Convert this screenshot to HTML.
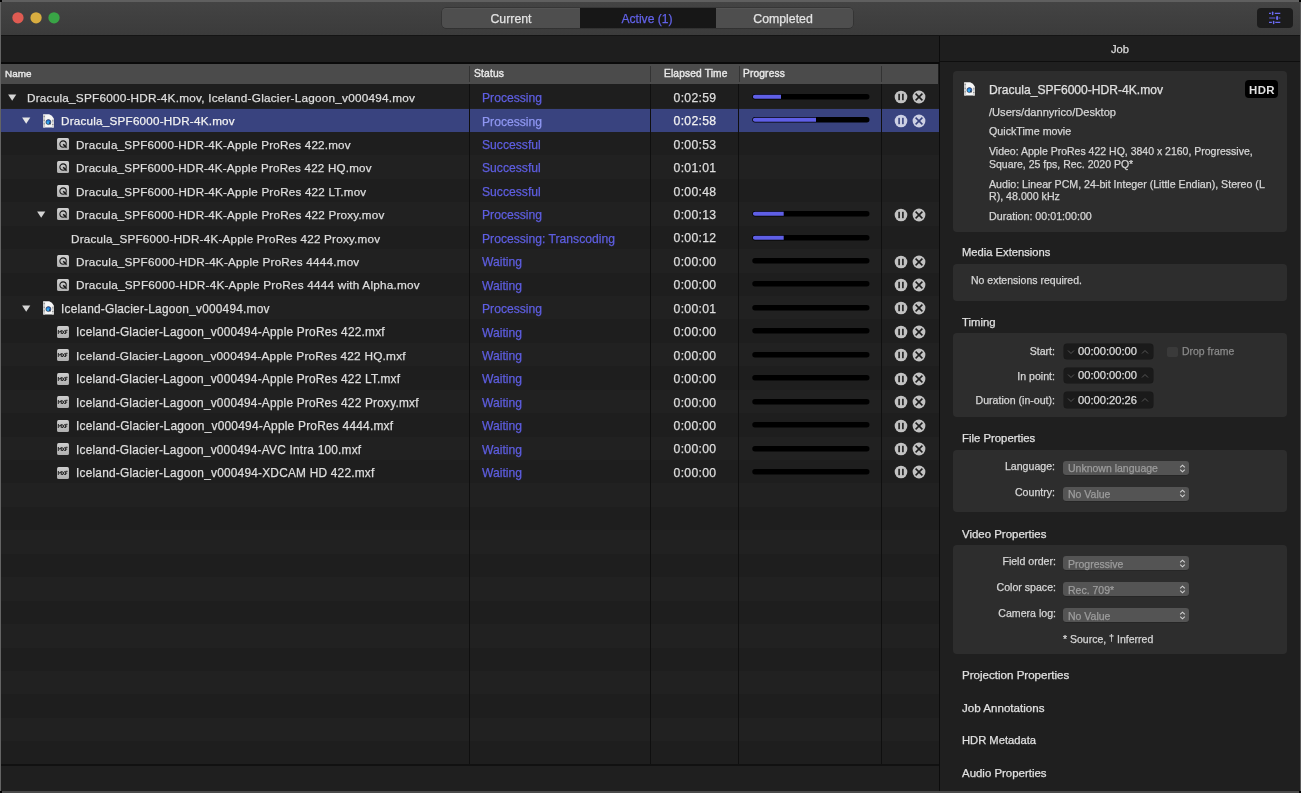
<!DOCTYPE html>
<html><head><meta charset="utf-8"><style>
html,body{margin:0;padding:0;}
body{width:1302px;height:796px;background:#ffffff;position:relative;overflow:hidden;font-family:"Liberation Sans",sans-serif;}
.r{position:absolute;}
.t{position:absolute;line-height:20px;white-space:nowrap;-webkit-text-stroke:0.25px currentColor;will-change:transform;}
</style></head><body>
<div class="r" style="left:0px;top:0px;width:1301px;height:793px;background:#1e1e1e;"></div>
<div class="r" style="left:0px;top:0px;width:1301px;height:35px;background:linear-gradient(#444444,#3b3b3b);"></div>
<div class="r" style="left:0px;top:0px;width:1301px;height:2px;background:#5f5f5f;"></div>
<div class="r" style="left:0px;top:35px;width:1301px;height:1px;background:#141414;"></div>
<svg class="r" style="left:0;top:0" width="70" height="35" viewBox="0 0 70 35"><circle cx="17.95" cy="17.85" r="5.65" fill="#df5b52"/><circle cx="36.05" cy="17.85" r="5.65" fill="#d8ad40"/><circle cx="54.0" cy="17.85" r="5.65" fill="#39a446"/></svg>
<div class="r" style="left:442px;top:8px;width:411px;height:20px;background:#4e4e4e;border-radius:4px;box-shadow:0 0.5px 0 rgba(255,255,255,0.08) inset, 0 0 0 0.5px rgba(0,0,0,0.35);"></div>
<div class="r" style="left:580px;top:8px;width:136px;height:20px;background:#171717;"></div>
<div class="t" style="top:8.54px;font-size:12.3px;color:#e2e2e2;left:211.20px;width:600px;text-align:center;">Current</div>
<div class="t" style="top:8.61px;font-size:12.1px;color:#6262e8;left:347.20px;width:600px;text-align:center;">Active (1)</div>
<div class="t" style="top:8.54px;font-size:12.3px;color:#e2e2e2;left:483.00px;width:600px;text-align:center;">Completed</div>
<div class="r" style="left:1257px;top:8px;width:36px;height:20px;background:#1c1c1c;border-radius:4px;"></div>
<svg class="r" style="left:1266px;top:8px" width="18" height="20" viewBox="0 0 18 20">
<g stroke="#6a6af2" stroke-width="1.15" stroke-linecap="butt" fill="none">
<path d="M3.0 5.4H4.9M8.8 5.4H14.3"/>
<path d="M3.2 10H9.3" stroke="#5656c4"/>
<path d="M13.2 10H14.3"/>
<path d="M3.0 14.4H5.9M9.3 14.4H14.3"/>
</g>
<g fill="#6a6af2">
<rect x="5.9" y="3.6" width="1.5" height="3.6" rx="0.75"/>
<rect x="10.1" y="8.0" width="2.1" height="4.0" rx="1.05"/>
<rect x="6.9" y="12.8" width="1.5" height="3.5" rx="0.75"/>
</g>
</svg>
<div class="r" style="left:1px;top:36px;width:938px;height:25px;background:#1e1e1e;"></div>
<div class="r" style="left:1px;top:62px;width:938px;height:2px;background:#0a0a0a;"></div>
<div class="r" style="left:1px;top:64px;width:937px;height:20px;background:#4b4b4b;"></div>
<div class="r" style="left:469px;top:65.5px;width:1px;height:16.5px;background:#333333;"></div>
<div class="r" style="left:650px;top:65.5px;width:1px;height:16.5px;background:#333333;"></div>
<div class="r" style="left:739px;top:65.5px;width:1px;height:16.5px;background:#333333;"></div>
<div class="r" style="left:881px;top:65.5px;width:1px;height:16.5px;background:#333333;"></div>
<div class="t" style="top:64.27px;font-size:9.9px;color:#e8e8e8;left:4.60px;-webkit-text-stroke:0.4px #e8e8e8;letter-spacing:0.05px;">Name</div>
<div class="t" style="top:64.13px;font-size:10.3px;color:#e8e8e8;left:473.80px;-webkit-text-stroke:0.4px #e8e8e8;letter-spacing:0.15px;">Status</div>
<div class="t" style="top:64.17px;font-size:10.2px;color:#e8e8e8;left:663.70px;-webkit-text-stroke:0.4px #e8e8e8;letter-spacing:0.15px;">Elapsed Time</div>
<div class="t" style="top:64.17px;font-size:10.2px;color:#e8e8e8;left:743.00px;-webkit-text-stroke:0.4px #e8e8e8;letter-spacing:0.15px;">Progress</div>
<div class="r" style="left:1px;top:85.4px;width:938px;height:678.6px;background:repeating-linear-gradient(#1e1e1e 0px,#1e1e1e 23.44px,#212121 23.44px,#212121 46.88px);"></div>
<div class="r" style="left:1px;top:84px;width:938px;height:1.4px;background:#1e1e1e;"></div>
<div class="r" style="left:1px;top:108.8px;width:938px;height:23.1px;background:#39437f;"></div>
<div class="r" style="left:469.0px;top:84px;width:1.2px;height:680px;background:#0f0f0f;"></div>
<div class="r" style="left:650.0px;top:84px;width:1.2px;height:680px;background:#0f0f0f;"></div>
<div class="r" style="left:738.0px;top:84px;width:1.2px;height:680px;background:#0f0f0f;"></div>
<div class="r" style="left:881.0px;top:84px;width:1.2px;height:680px;background:#0f0f0f;"></div>
<div class="r" style="left:1px;top:764px;width:938px;height:1.6px;background:#111111;"></div>
<div class="r" style="left:1px;top:765.6px;width:938px;height:25.4px;background:#1f1f1f;"></div>
<div class="r" style="left:938.6px;top:36px;width:1.3px;height:755px;background:#0c0c0c;"></div>
<svg class="r" style="left:7.60px;top:93.82px" width="9" height="8" viewBox="0 0 9 8"><path d="M0.1 0.45H8.3L4.2 6.85Z" fill="#d4d4d4"/></svg>
<div class="t" style="top:87.94px;font-size:11.773px;color:#dedede;left:26.90px;letter-spacing:0.219px;">Dracula_SPF6000-HDR-4K.mov, Iceland-Glacier-Lagoon_v000494.mov</div>
<div class="t" style="top:88.11px;font-size:12.15px;color:#5e5ee0;left:481.70px;">Processing</div>
<div class="t" style="top:87.79px;font-size:12.2px;color:#dedede;left:394.80px;width:600px;text-align:center;letter-spacing:0.3px;">0:02:59</div>
<svg class="r" style="left:752px;top:92.92px" width="119" height="8" viewBox="0 0 119 8"><rect x="0.3" y="1" width="117.2" height="5.4" rx="2.7" fill="#000"/><path d="M2.95 1.65H29.00V5.75H2.95A2.05 2.05 0 0 1 2.95 1.65Z" fill="#5f5fe6"/></svg>
<svg class="r" style="left:894px;top:90.42px" width="33" height="14" viewBox="0 0 33 14"><circle cx="7" cy="7" r="6.3" fill="#c2c2c2"/><rect x="4.3" y="3.8" width="1.6" height="6.4" fill="#1c1c1c"/><rect x="8.1" y="3.8" width="1.6" height="6.4" fill="#1c1c1c"/><circle cx="25" cy="7" r="6.4" fill="#c2c2c2"/><path d="M21.6 3.6L28.4 10.4M28.4 3.6L21.6 10.4" stroke="#1c1c1c" stroke-width="1.55"/></svg>
<svg class="r" style="left:21.60px;top:117.26px" width="9" height="8" viewBox="0 0 9 8"><path d="M0.1 0.45H8.3L4.2 6.85Z" fill="#e6e6e6"/></svg>
<svg class="r" style="left:43.300000000000004px;top:113.8px" width="11" height="14" viewBox="0 0 11 14">
<defs><radialGradient id="bq" cx="0.4" cy="0.6" r="0.65"><stop offset="0" stop-color="#3fc0f5"/><stop offset="1" stop-color="#1a4fc0"/></radialGradient></defs>
<path d="M0.2 0.2H6.2Q9.2 1.2 10.8 4.6V13.5H0.2Z" fill="#f7f7f7"/>
<rect x="0.2" y="0.6" width="1.9" height="12.9" fill="#cfcfcf"/>
<rect x="8.9" y="5.2" width="1.9" height="8.3" fill="#d6d6d6"/>
<g fill="#5a5a5a"><rect x="0.7" y="2.2" width="0.9" height="0.9"/><rect x="0.7" y="5.8" width="0.9" height="0.9"/><rect x="0.7" y="9.4" width="0.9" height="0.9"/><rect x="9.4" y="6.4" width="0.9" height="0.9"/><rect x="9.4" y="10.0" width="0.9" height="0.9"/></g>
<circle cx="5.4" cy="8.1" r="2.5" fill="url(#bq)" stroke="#2a2a30" stroke-width="0.55"/>
<path d="M6.0 8.6L7.6 10.1" stroke="#1a1a1a" stroke-width="0.9"/>
</svg>
<div class="t" style="top:111.41px;font-size:11.676px;color:#f2f2f2;left:61.10px;letter-spacing:0.234px;">Dracula_SPF6000-HDR-4K.mov</div>
<div class="t" style="top:111.55px;font-size:12.15px;color:#8f97f2;left:481.70px;">Processing</div>
<div class="t" style="top:111.23px;font-size:12.2px;color:#f2f2f2;left:394.80px;width:600px;text-align:center;letter-spacing:0.3px;">0:02:58</div>
<svg class="r" style="left:752px;top:116.36px" width="119" height="8" viewBox="0 0 119 8"><rect x="0.3" y="1" width="117.2" height="5.4" rx="2.7" fill="#000"/><path d="M2.95 1.65H64.00V5.75H2.95A2.05 2.05 0 0 1 2.95 1.65Z" fill="#5f5fe6"/></svg>
<svg class="r" style="left:894px;top:113.86px" width="33" height="14" viewBox="0 0 33 14"><circle cx="7" cy="7" r="6.3" fill="#cdd0e4"/><rect x="4.3" y="3.8" width="1.6" height="6.4" fill="#39437f"/><rect x="8.1" y="3.8" width="1.6" height="6.4" fill="#39437f"/><circle cx="25" cy="7" r="6.4" fill="#cdd0e4"/><path d="M21.6 3.6L28.4 10.4M28.4 3.6L21.6 10.4" stroke="#39437f" stroke-width="1.55"/></svg>
<svg class="r" style="left:57px;top:137.95px" width="12" height="12" viewBox="0 0 12 12">
<defs><linearGradient id="qg" x1="0" y1="0" x2="0" y2="1"><stop offset="0" stop-color="#d0d0d0"/><stop offset="1" stop-color="#b2b2b2"/></linearGradient></defs>
<rect x="0.05" y="0.05" width="11.95" height="11.95" rx="1.5" fill="url(#qg)"/>
<circle cx="6.05" cy="6.05" r="3.2" fill="none" stroke="#161616" stroke-width="1.05"/>
<path d="M6.2 6.2L9.6 9.6" stroke="#161616" stroke-width="1.5"/>
</svg>
<div class="t" style="top:134.87px;font-size:11.628px;color:#dedede;left:76.30px;letter-spacing:0.224px;">Dracula_SPF6000-HDR-4K-Apple ProRes 422.mov</div>
<div class="t" style="top:134.99px;font-size:12.15px;color:#5e5ee0;left:481.70px;">Successful</div>
<div class="t" style="top:134.67px;font-size:12.2px;color:#dedede;left:394.80px;width:600px;text-align:center;letter-spacing:0.3px;">0:00:53</div>
<svg class="r" style="left:57px;top:161.39px" width="12" height="12" viewBox="0 0 12 12">
<defs><linearGradient id="qg" x1="0" y1="0" x2="0" y2="1"><stop offset="0" stop-color="#d0d0d0"/><stop offset="1" stop-color="#b2b2b2"/></linearGradient></defs>
<rect x="0.05" y="0.05" width="11.95" height="11.95" rx="1.5" fill="url(#qg)"/>
<circle cx="6.05" cy="6.05" r="3.2" fill="none" stroke="#161616" stroke-width="1.05"/>
<path d="M6.2 6.2L9.6 9.6" stroke="#161616" stroke-width="1.5"/>
</svg>
<div class="t" style="top:158.32px;font-size:11.609px;color:#dedede;left:76.30px;letter-spacing:0.225px;">Dracula_SPF6000-HDR-4K-Apple ProRes 422 HQ.mov</div>
<div class="t" style="top:158.43px;font-size:12.15px;color:#5e5ee0;left:481.70px;">Successful</div>
<div class="t" style="top:158.11px;font-size:12.2px;color:#dedede;left:394.80px;width:600px;text-align:center;letter-spacing:0.3px;">0:01:01</div>
<svg class="r" style="left:57px;top:184.83px" width="12" height="12" viewBox="0 0 12 12">
<defs><linearGradient id="qg" x1="0" y1="0" x2="0" y2="1"><stop offset="0" stop-color="#d0d0d0"/><stop offset="1" stop-color="#b2b2b2"/></linearGradient></defs>
<rect x="0.05" y="0.05" width="11.95" height="11.95" rx="1.5" fill="url(#qg)"/>
<circle cx="6.05" cy="6.05" r="3.2" fill="none" stroke="#161616" stroke-width="1.05"/>
<path d="M6.2 6.2L9.6 9.6" stroke="#161616" stroke-width="1.5"/>
</svg>
<div class="t" style="top:181.75px;font-size:11.638px;color:#dedede;left:76.30px;letter-spacing:0.221px;">Dracula_SPF6000-HDR-4K-Apple ProRes 422 LT.mov</div>
<div class="t" style="top:181.87px;font-size:12.15px;color:#5e5ee0;left:481.70px;">Successful</div>
<div class="t" style="top:181.55px;font-size:12.2px;color:#dedede;left:394.80px;width:600px;text-align:center;letter-spacing:0.3px;">0:00:48</div>
<svg class="r" style="left:36.60px;top:211.02px" width="9" height="8" viewBox="0 0 9 8"><path d="M0.1 0.45H8.3L4.2 6.85Z" fill="#d4d4d4"/></svg>
<svg class="r" style="left:57px;top:208.27px" width="12" height="12" viewBox="0 0 12 12">
<defs><linearGradient id="qg" x1="0" y1="0" x2="0" y2="1"><stop offset="0" stop-color="#d0d0d0"/><stop offset="1" stop-color="#b2b2b2"/></linearGradient></defs>
<rect x="0.05" y="0.05" width="11.95" height="11.95" rx="1.5" fill="url(#qg)"/>
<circle cx="6.05" cy="6.05" r="3.2" fill="none" stroke="#161616" stroke-width="1.05"/>
<path d="M6.2 6.2L9.6 9.6" stroke="#161616" stroke-width="1.5"/>
</svg>
<div class="t" style="top:205.19px;font-size:11.638px;color:#dedede;left:76.30px;letter-spacing:0.221px;">Dracula_SPF6000-HDR-4K-Apple ProRes 422 Proxy.mov</div>
<div class="t" style="top:205.31px;font-size:12.15px;color:#5e5ee0;left:481.70px;">Processing</div>
<div class="t" style="top:204.99px;font-size:12.2px;color:#dedede;left:394.80px;width:600px;text-align:center;letter-spacing:0.3px;">0:00:13</div>
<svg class="r" style="left:752px;top:210.12px" width="119" height="8" viewBox="0 0 119 8"><rect x="0.3" y="1" width="117.2" height="5.4" rx="2.7" fill="#000"/><path d="M2.95 1.65H31.70V5.75H2.95A2.05 2.05 0 0 1 2.95 1.65Z" fill="#5f5fe6"/></svg>
<svg class="r" style="left:894px;top:207.62px" width="33" height="14" viewBox="0 0 33 14"><circle cx="7" cy="7" r="6.3" fill="#c2c2c2"/><rect x="4.3" y="3.8" width="1.6" height="6.4" fill="#1c1c1c"/><rect x="8.1" y="3.8" width="1.6" height="6.4" fill="#1c1c1c"/><circle cx="25" cy="7" r="6.4" fill="#c2c2c2"/><path d="M21.6 3.6L28.4 10.4M28.4 3.6L21.6 10.4" stroke="#1c1c1c" stroke-width="1.55"/></svg>
<div class="t" style="top:228.62px;font-size:11.667px;color:#dedede;left:70.70px;letter-spacing:0.221px;">Dracula_SPF6000-HDR-4K-Apple ProRes 422 Proxy.mov</div>
<div class="t" style="top:228.75px;font-size:12.15px;color:#5e5ee0;left:481.70px;">Processing: Transcoding</div>
<div class="t" style="top:228.43px;font-size:12.2px;color:#dedede;left:394.80px;width:600px;text-align:center;letter-spacing:0.3px;">0:00:12</div>
<svg class="r" style="left:752px;top:233.56px" width="119" height="8" viewBox="0 0 119 8"><rect x="0.3" y="1" width="117.2" height="5.4" rx="2.7" fill="#000"/><path d="M2.95 1.65H31.70V5.75H2.95A2.05 2.05 0 0 1 2.95 1.65Z" fill="#5f5fe6"/></svg>
<svg class="r" style="left:57px;top:255.15px" width="12" height="12" viewBox="0 0 12 12">
<defs><linearGradient id="qg" x1="0" y1="0" x2="0" y2="1"><stop offset="0" stop-color="#d0d0d0"/><stop offset="1" stop-color="#b2b2b2"/></linearGradient></defs>
<rect x="0.05" y="0.05" width="11.95" height="11.95" rx="1.5" fill="url(#qg)"/>
<circle cx="6.05" cy="6.05" r="3.2" fill="none" stroke="#161616" stroke-width="1.05"/>
<path d="M6.2 6.2L9.6 9.6" stroke="#161616" stroke-width="1.5"/>
</svg>
<div class="t" style="top:252.05px;font-size:11.696px;color:#dedede;left:76.30px;letter-spacing:0.226px;">Dracula_SPF6000-HDR-4K-Apple ProRes 4444.mov</div>
<div class="t" style="top:252.19px;font-size:12.15px;color:#5e5ee0;left:481.70px;">Waiting</div>
<div class="t" style="top:251.87px;font-size:12.2px;color:#dedede;left:394.80px;width:600px;text-align:center;letter-spacing:0.3px;">0:00:00</div>
<svg class="r" style="left:752px;top:257.00px" width="119" height="8" viewBox="0 0 119 8"><rect x="0.3" y="1" width="117.2" height="5.4" rx="2.7" fill="#000"/></svg>
<svg class="r" style="left:894px;top:254.5px" width="33" height="14" viewBox="0 0 33 14"><circle cx="7" cy="7" r="6.3" fill="#c2c2c2"/><rect x="4.3" y="3.8" width="1.6" height="6.4" fill="#1c1c1c"/><rect x="8.1" y="3.8" width="1.6" height="6.4" fill="#1c1c1c"/><circle cx="25" cy="7" r="6.4" fill="#c2c2c2"/><path d="M21.6 3.6L28.4 10.4M28.4 3.6L21.6 10.4" stroke="#1c1c1c" stroke-width="1.55"/></svg>
<svg class="r" style="left:57px;top:278.59px" width="12" height="12" viewBox="0 0 12 12">
<defs><linearGradient id="qg" x1="0" y1="0" x2="0" y2="1"><stop offset="0" stop-color="#d0d0d0"/><stop offset="1" stop-color="#b2b2b2"/></linearGradient></defs>
<rect x="0.05" y="0.05" width="11.95" height="11.95" rx="1.5" fill="url(#qg)"/>
<circle cx="6.05" cy="6.05" r="3.2" fill="none" stroke="#161616" stroke-width="1.05"/>
<path d="M6.2 6.2L9.6 9.6" stroke="#161616" stroke-width="1.5"/>
</svg>
<div class="t" style="top:275.47px;font-size:11.754px;color:#dedede;left:76.30px;letter-spacing:0.219px;">Dracula_SPF6000-HDR-4K-Apple ProRes 4444 with Alpha.mov</div>
<div class="t" style="top:275.63px;font-size:12.15px;color:#5e5ee0;left:481.70px;">Waiting</div>
<div class="t" style="top:275.31px;font-size:12.2px;color:#dedede;left:394.80px;width:600px;text-align:center;letter-spacing:0.3px;">0:00:00</div>
<svg class="r" style="left:752px;top:280.44px" width="119" height="8" viewBox="0 0 119 8"><rect x="0.3" y="1" width="117.2" height="5.4" rx="2.7" fill="#000"/></svg>
<svg class="r" style="left:894px;top:277.94px" width="33" height="14" viewBox="0 0 33 14"><circle cx="7" cy="7" r="6.3" fill="#c2c2c2"/><rect x="4.3" y="3.8" width="1.6" height="6.4" fill="#1c1c1c"/><rect x="8.1" y="3.8" width="1.6" height="6.4" fill="#1c1c1c"/><circle cx="25" cy="7" r="6.4" fill="#c2c2c2"/><path d="M21.6 3.6L28.4 10.4M28.4 3.6L21.6 10.4" stroke="#1c1c1c" stroke-width="1.55"/></svg>
<svg class="r" style="left:21.60px;top:304.78px" width="9" height="8" viewBox="0 0 9 8"><path d="M0.1 0.45H8.3L4.2 6.85Z" fill="#d4d4d4"/></svg>
<svg class="r" style="left:43.300000000000004px;top:301.32px" width="11" height="14" viewBox="0 0 11 14">
<defs><radialGradient id="bq" cx="0.4" cy="0.6" r="0.65"><stop offset="0" stop-color="#3fc0f5"/><stop offset="1" stop-color="#1a4fc0"/></radialGradient></defs>
<path d="M0.2 0.2H6.2Q9.2 1.2 10.8 4.6V13.5H0.2Z" fill="#f7f7f7"/>
<rect x="0.2" y="0.6" width="1.9" height="12.9" fill="#cfcfcf"/>
<rect x="8.9" y="5.2" width="1.9" height="8.3" fill="#d6d6d6"/>
<g fill="#5a5a5a"><rect x="0.7" y="2.2" width="0.9" height="0.9"/><rect x="0.7" y="5.8" width="0.9" height="0.9"/><rect x="0.7" y="9.4" width="0.9" height="0.9"/><rect x="9.4" y="6.4" width="0.9" height="0.9"/><rect x="9.4" y="10.0" width="0.9" height="0.9"/></g>
<circle cx="5.4" cy="8.1" r="2.5" fill="url(#bq)" stroke="#2a2a30" stroke-width="0.55"/>
<path d="M6.0 8.6L7.6 10.1" stroke="#1a1a1a" stroke-width="0.9"/>
</svg>
<div class="t" style="top:298.86px;font-size:11.898px;color:#dedede;left:60.80px;letter-spacing:0.215px;">Iceland-Glacier-Lagoon_v000494.mov</div>
<div class="t" style="top:299.07px;font-size:12.15px;color:#5e5ee0;left:481.70px;">Processing</div>
<div class="t" style="top:298.75px;font-size:12.2px;color:#dedede;left:394.80px;width:600px;text-align:center;letter-spacing:0.3px;">0:00:01</div>
<svg class="r" style="left:752px;top:303.88px" width="119" height="8" viewBox="0 0 119 8"><rect x="0.3" y="1" width="117.2" height="5.4" rx="2.7" fill="#000"/></svg>
<svg class="r" style="left:894px;top:301.38px" width="33" height="14" viewBox="0 0 33 14"><circle cx="7" cy="7" r="6.3" fill="#c2c2c2"/><rect x="4.3" y="3.8" width="1.6" height="6.4" fill="#1c1c1c"/><rect x="8.1" y="3.8" width="1.6" height="6.4" fill="#1c1c1c"/><circle cx="25" cy="7" r="6.4" fill="#c2c2c2"/><path d="M21.6 3.6L28.4 10.4M28.4 3.6L21.6 10.4" stroke="#1c1c1c" stroke-width="1.55"/></svg>
<svg class="r" style="left:57.1px;top:325.92px" width="12" height="12" viewBox="0 0 12 12">
<defs><linearGradient id="mg" x1="0" y1="0" x2="0" y2="1"><stop offset="0" stop-color="#cdcdcd"/><stop offset="1" stop-color="#b0b0b0"/></linearGradient></defs>
<rect x="0.05" y="0.05" width="11.9" height="11.95" rx="1.6" fill="url(#mg)"/>
<path d="M1.3 8V4.3L2.8 6.4L4.3 4.3V8M5.2 4.3L7.6 8M7.6 4.3L5.2 8M8.6 8V4.3H10.6M8.6 6.1H10.2" stroke="#1e1e1e" stroke-width="0.95" fill="none"/>
</svg>
<div class="t" style="top:322.30px;font-size:11.879px;color:#dedede;left:76.30px;letter-spacing:0.212px;">Iceland-Glacier-Lagoon_v000494-Apple ProRes 422.mxf</div>
<div class="t" style="top:322.51px;font-size:12.15px;color:#5e5ee0;left:481.70px;">Waiting</div>
<div class="t" style="top:322.19px;font-size:12.2px;color:#dedede;left:394.80px;width:600px;text-align:center;letter-spacing:0.3px;">0:00:00</div>
<svg class="r" style="left:752px;top:327.32px" width="119" height="8" viewBox="0 0 119 8"><rect x="0.3" y="1" width="117.2" height="5.4" rx="2.7" fill="#000"/></svg>
<svg class="r" style="left:894px;top:324.82px" width="33" height="14" viewBox="0 0 33 14"><circle cx="7" cy="7" r="6.3" fill="#c2c2c2"/><rect x="4.3" y="3.8" width="1.6" height="6.4" fill="#1c1c1c"/><rect x="8.1" y="3.8" width="1.6" height="6.4" fill="#1c1c1c"/><circle cx="25" cy="7" r="6.4" fill="#c2c2c2"/><path d="M21.6 3.6L28.4 10.4M28.4 3.6L21.6 10.4" stroke="#1c1c1c" stroke-width="1.55"/></svg>
<svg class="r" style="left:57.1px;top:349.36px" width="12" height="12" viewBox="0 0 12 12">
<defs><linearGradient id="mg" x1="0" y1="0" x2="0" y2="1"><stop offset="0" stop-color="#cdcdcd"/><stop offset="1" stop-color="#b0b0b0"/></linearGradient></defs>
<rect x="0.05" y="0.05" width="11.9" height="11.95" rx="1.6" fill="url(#mg)"/>
<path d="M1.3 8V4.3L2.8 6.4L4.3 4.3V8M5.2 4.3L7.6 8M7.6 4.3L5.2 8M8.6 8V4.3H10.6M8.6 6.1H10.2" stroke="#1e1e1e" stroke-width="0.95" fill="none"/>
</svg>
<div class="t" style="top:345.76px;font-size:11.841px;color:#dedede;left:76.30px;letter-spacing:0.214px;">Iceland-Glacier-Lagoon_v000494-Apple ProRes 422 HQ.mxf</div>
<div class="t" style="top:345.95px;font-size:12.15px;color:#5e5ee0;left:481.70px;">Waiting</div>
<div class="t" style="top:345.63px;font-size:12.2px;color:#dedede;left:394.80px;width:600px;text-align:center;letter-spacing:0.3px;">0:00:00</div>
<svg class="r" style="left:752px;top:350.76px" width="119" height="8" viewBox="0 0 119 8"><rect x="0.3" y="1" width="117.2" height="5.4" rx="2.7" fill="#000"/></svg>
<svg class="r" style="left:894px;top:348.26px" width="33" height="14" viewBox="0 0 33 14"><circle cx="7" cy="7" r="6.3" fill="#c2c2c2"/><rect x="4.3" y="3.8" width="1.6" height="6.4" fill="#1c1c1c"/><rect x="8.1" y="3.8" width="1.6" height="6.4" fill="#1c1c1c"/><circle cx="25" cy="7" r="6.4" fill="#c2c2c2"/><path d="M21.6 3.6L28.4 10.4M28.4 3.6L21.6 10.4" stroke="#1c1c1c" stroke-width="1.55"/></svg>
<svg class="r" style="left:57.1px;top:372.8px" width="12" height="12" viewBox="0 0 12 12">
<defs><linearGradient id="mg" x1="0" y1="0" x2="0" y2="1"><stop offset="0" stop-color="#cdcdcd"/><stop offset="1" stop-color="#b0b0b0"/></linearGradient></defs>
<rect x="0.05" y="0.05" width="11.9" height="11.95" rx="1.6" fill="url(#mg)"/>
<path d="M1.3 8V4.3L2.8 6.4L4.3 4.3V8M5.2 4.3L7.6 8M7.6 4.3L5.2 8M8.6 8V4.3H10.6M8.6 6.1H10.2" stroke="#1e1e1e" stroke-width="0.95" fill="none"/>
</svg>
<div class="t" style="top:369.19px;font-size:11.87px;color:#dedede;left:76.30px;letter-spacing:0.210px;">Iceland-Glacier-Lagoon_v000494-Apple ProRes 422 LT.mxf</div>
<div class="t" style="top:369.39px;font-size:12.15px;color:#5e5ee0;left:481.70px;">Waiting</div>
<div class="t" style="top:369.07px;font-size:12.2px;color:#dedede;left:394.80px;width:600px;text-align:center;letter-spacing:0.3px;">0:00:00</div>
<svg class="r" style="left:752px;top:374.20px" width="119" height="8" viewBox="0 0 119 8"><rect x="0.3" y="1" width="117.2" height="5.4" rx="2.7" fill="#000"/></svg>
<svg class="r" style="left:894px;top:371.7px" width="33" height="14" viewBox="0 0 33 14"><circle cx="7" cy="7" r="6.3" fill="#c2c2c2"/><rect x="4.3" y="3.8" width="1.6" height="6.4" fill="#1c1c1c"/><rect x="8.1" y="3.8" width="1.6" height="6.4" fill="#1c1c1c"/><circle cx="25" cy="7" r="6.4" fill="#c2c2c2"/><path d="M21.6 3.6L28.4 10.4M28.4 3.6L21.6 10.4" stroke="#1c1c1c" stroke-width="1.55"/></svg>
<svg class="r" style="left:57.1px;top:396.24px" width="12" height="12" viewBox="0 0 12 12">
<defs><linearGradient id="mg" x1="0" y1="0" x2="0" y2="1"><stop offset="0" stop-color="#cdcdcd"/><stop offset="1" stop-color="#b0b0b0"/></linearGradient></defs>
<rect x="0.05" y="0.05" width="11.9" height="11.95" rx="1.6" fill="url(#mg)"/>
<path d="M1.3 8V4.3L2.8 6.4L4.3 4.3V8M5.2 4.3L7.6 8M7.6 4.3L5.2 8M8.6 8V4.3H10.6M8.6 6.1H10.2" stroke="#1e1e1e" stroke-width="0.95" fill="none"/>
</svg>
<div class="t" style="top:392.63px;font-size:11.86px;color:#dedede;left:76.30px;letter-spacing:0.210px;">Iceland-Glacier-Lagoon_v000494-Apple ProRes 422 Proxy.mxf</div>
<div class="t" style="top:392.83px;font-size:12.15px;color:#5e5ee0;left:481.70px;">Waiting</div>
<div class="t" style="top:392.51px;font-size:12.2px;color:#dedede;left:394.80px;width:600px;text-align:center;letter-spacing:0.3px;">0:00:00</div>
<svg class="r" style="left:752px;top:397.64px" width="119" height="8" viewBox="0 0 119 8"><rect x="0.3" y="1" width="117.2" height="5.4" rx="2.7" fill="#000"/></svg>
<svg class="r" style="left:894px;top:395.14px" width="33" height="14" viewBox="0 0 33 14"><circle cx="7" cy="7" r="6.3" fill="#c2c2c2"/><rect x="4.3" y="3.8" width="1.6" height="6.4" fill="#1c1c1c"/><rect x="8.1" y="3.8" width="1.6" height="6.4" fill="#1c1c1c"/><circle cx="25" cy="7" r="6.4" fill="#c2c2c2"/><path d="M21.6 3.6L28.4 10.4M28.4 3.6L21.6 10.4" stroke="#1c1c1c" stroke-width="1.55"/></svg>
<svg class="r" style="left:57.1px;top:419.68px" width="12" height="12" viewBox="0 0 12 12">
<defs><linearGradient id="mg" x1="0" y1="0" x2="0" y2="1"><stop offset="0" stop-color="#cdcdcd"/><stop offset="1" stop-color="#b0b0b0"/></linearGradient></defs>
<rect x="0.05" y="0.05" width="11.9" height="11.95" rx="1.6" fill="url(#mg)"/>
<path d="M1.3 8V4.3L2.8 6.4L4.3 4.3V8M5.2 4.3L7.6 8M7.6 4.3L5.2 8M8.6 8V4.3H10.6M8.6 6.1H10.2" stroke="#1e1e1e" stroke-width="0.95" fill="none"/>
</svg>
<div class="t" style="top:416.04px;font-size:11.937px;color:#dedede;left:76.30px;letter-spacing:0.214px;">Iceland-Glacier-Lagoon_v000494-Apple ProRes 4444.mxf</div>
<div class="t" style="top:416.27px;font-size:12.15px;color:#5e5ee0;left:481.70px;">Waiting</div>
<div class="t" style="top:415.95px;font-size:12.2px;color:#dedede;left:394.80px;width:600px;text-align:center;letter-spacing:0.3px;">0:00:00</div>
<svg class="r" style="left:752px;top:421.08px" width="119" height="8" viewBox="0 0 119 8"><rect x="0.3" y="1" width="117.2" height="5.4" rx="2.7" fill="#000"/></svg>
<svg class="r" style="left:894px;top:418.58px" width="33" height="14" viewBox="0 0 33 14"><circle cx="7" cy="7" r="6.3" fill="#c2c2c2"/><rect x="4.3" y="3.8" width="1.6" height="6.4" fill="#1c1c1c"/><rect x="8.1" y="3.8" width="1.6" height="6.4" fill="#1c1c1c"/><circle cx="25" cy="7" r="6.4" fill="#c2c2c2"/><path d="M21.6 3.6L28.4 10.4M28.4 3.6L21.6 10.4" stroke="#1c1c1c" stroke-width="1.55"/></svg>
<svg class="r" style="left:57.1px;top:443.12px" width="12" height="12" viewBox="0 0 12 12">
<defs><linearGradient id="mg" x1="0" y1="0" x2="0" y2="1"><stop offset="0" stop-color="#cdcdcd"/><stop offset="1" stop-color="#b0b0b0"/></linearGradient></defs>
<rect x="0.05" y="0.05" width="11.9" height="11.95" rx="1.6" fill="url(#mg)"/>
<path d="M1.3 8V4.3L2.8 6.4L4.3 4.3V8M5.2 4.3L7.6 8M7.6 4.3L5.2 8M8.6 8V4.3H10.6M8.6 6.1H10.2" stroke="#1e1e1e" stroke-width="0.95" fill="none"/>
</svg>
<div class="t" style="top:439.51px;font-size:11.86px;color:#dedede;left:76.30px;letter-spacing:0.208px;">Iceland-Glacier-Lagoon_v000494-AVC Intra 100.mxf</div>
<div class="t" style="top:439.71px;font-size:12.15px;color:#5e5ee0;left:481.70px;">Waiting</div>
<div class="t" style="top:439.39px;font-size:12.2px;color:#dedede;left:394.80px;width:600px;text-align:center;letter-spacing:0.3px;">0:00:00</div>
<svg class="r" style="left:752px;top:444.52px" width="119" height="8" viewBox="0 0 119 8"><rect x="0.3" y="1" width="117.2" height="5.4" rx="2.7" fill="#000"/></svg>
<svg class="r" style="left:894px;top:442.02px" width="33" height="14" viewBox="0 0 33 14"><circle cx="7" cy="7" r="6.3" fill="#c2c2c2"/><rect x="4.3" y="3.8" width="1.6" height="6.4" fill="#1c1c1c"/><rect x="8.1" y="3.8" width="1.6" height="6.4" fill="#1c1c1c"/><circle cx="25" cy="7" r="6.4" fill="#c2c2c2"/><path d="M21.6 3.6L28.4 10.4M28.4 3.6L21.6 10.4" stroke="#1c1c1c" stroke-width="1.55"/></svg>
<svg class="r" style="left:57.1px;top:466.56px" width="12" height="12" viewBox="0 0 12 12">
<defs><linearGradient id="mg" x1="0" y1="0" x2="0" y2="1"><stop offset="0" stop-color="#cdcdcd"/><stop offset="1" stop-color="#b0b0b0"/></linearGradient></defs>
<rect x="0.05" y="0.05" width="11.9" height="11.95" rx="1.6" fill="url(#mg)"/>
<path d="M1.3 8V4.3L2.8 6.4L4.3 4.3V8M5.2 4.3L7.6 8M7.6 4.3L5.2 8M8.6 8V4.3H10.6M8.6 6.1H10.2" stroke="#1e1e1e" stroke-width="0.95" fill="none"/>
</svg>
<div class="t" style="top:462.95px;font-size:11.87px;color:#dedede;left:76.30px;letter-spacing:0.222px;">Iceland-Glacier-Lagoon_v000494-XDCAM HD 422.mxf</div>
<div class="t" style="top:463.15px;font-size:12.15px;color:#5e5ee0;left:481.70px;">Waiting</div>
<div class="t" style="top:462.83px;font-size:12.2px;color:#dedede;left:394.80px;width:600px;text-align:center;letter-spacing:0.3px;">0:00:00</div>
<svg class="r" style="left:752px;top:467.96px" width="119" height="8" viewBox="0 0 119 8"><rect x="0.3" y="1" width="117.2" height="5.4" rx="2.7" fill="#000"/></svg>
<svg class="r" style="left:894px;top:465.46px" width="33" height="14" viewBox="0 0 33 14"><circle cx="7" cy="7" r="6.3" fill="#c2c2c2"/><rect x="4.3" y="3.8" width="1.6" height="6.4" fill="#1c1c1c"/><rect x="8.1" y="3.8" width="1.6" height="6.4" fill="#1c1c1c"/><circle cx="25" cy="7" r="6.4" fill="#c2c2c2"/><path d="M21.6 3.6L28.4 10.4M28.4 3.6L21.6 10.4" stroke="#1c1c1c" stroke-width="1.55"/></svg>
<div class="r" style="left:940px;top:36px;width:360px;height:25px;background:#1e1e1e;"></div>
<div class="r" style="left:940px;top:60.8px;width:360px;height:1.4px;background:#0e0e0e;"></div>
<div class="t" style="top:39.22px;font-size:11.2px;color:#dcdcdc;left:819.50px;width:600px;text-align:center;">Job</div>
<div class="r" style="left:940px;top:62.2px;width:360px;height:729px;background:#1f1f1f;"></div>
<div class="r" style="left:953px;top:71px;width:334px;height:161px;background:#2d2d2d;border-radius:4px;"></div>
<svg class="r" style="left:963.5px;top:81.5px" width="11" height="14" viewBox="0 0 11 14">
<defs><radialGradient id="bq" cx="0.4" cy="0.6" r="0.65"><stop offset="0" stop-color="#3fc0f5"/><stop offset="1" stop-color="#1a4fc0"/></radialGradient></defs>
<path d="M0.2 0.2H6.2Q9.2 1.2 10.8 4.6V13.5H0.2Z" fill="#f7f7f7"/>
<rect x="0.2" y="0.6" width="1.9" height="12.9" fill="#cfcfcf"/>
<rect x="8.9" y="5.2" width="1.9" height="8.3" fill="#d6d6d6"/>
<g fill="#5a5a5a"><rect x="0.7" y="2.2" width="0.9" height="0.9"/><rect x="0.7" y="5.8" width="0.9" height="0.9"/><rect x="0.7" y="9.4" width="0.9" height="0.9"/><rect x="9.4" y="6.4" width="0.9" height="0.9"/><rect x="9.4" y="10.0" width="0.9" height="0.9"/></g>
<circle cx="5.4" cy="8.1" r="2.5" fill="url(#bq)" stroke="#2a2a30" stroke-width="0.55"/>
<path d="M6.0 8.6L7.6 10.1" stroke="#1a1a1a" stroke-width="0.9"/>
</svg>
<div class="t" style="top:79.71px;font-size:12.1px;color:#e0e0e0;left:989.20px;">Dracula_SPF6000-HDR-4K.mov</div>
<div class="r" style="left:1245.3px;top:80.2px;width:32.3px;height:17.8px;background:#000;border-radius:4px;"></div>
<div class="t" style="top:79.85px;font-size:11.4px;color:#e2e2e2;font-weight:bold;left:961.50px;width:600px;text-align:center;letter-spacing:0.5px;-webkit-text-stroke:0;">HDR</div>
<div class="t" style="top:102.15px;font-size:11.1px;color:#d6d6d6;left:989.20px;">/Users/dannyrico/Desktop</div>
<div class="t" style="top:121.39px;font-size:10.7px;color:#d6d6d6;left:989.20px;">QuickTime movie</div>
<div class="t" style="top:140.96px;font-size:10.5px;color:#d6d6d6;left:989.20px;">Video: Apple ProRes 422 HQ, 3840 x 2160, Progressive,</div>
<div class="t" style="top:153.66px;font-size:10.5px;color:#d6d6d6;left:989.20px;">Square, 25 fps, Rec. 2020 PQ*</div>
<div class="t" style="top:173.72px;font-size:10.63px;color:#d6d6d6;left:989.20px;">Audio: Linear PCM, 24-bit Integer (Little Endian), Stereo (L</div>
<div class="t" style="top:186.12px;font-size:10.63px;color:#d6d6d6;left:989.20px;">R), 48.000 kHz</div>
<div class="t" style="top:206.39px;font-size:10.7px;color:#d6d6d6;left:989.20px;">Duration: 00:01:00:00</div>
<div class="t" style="top:242.12px;font-size:11.2px;color:#e0e0e0;left:962.20px;">Media Extensions</div>
<div class="r" style="left:953px;top:264.3px;width:334px;height:36.9px;background:#2d2d2d;border-radius:4px;"></div>
<div class="t" style="top:269.86px;font-size:10.5px;color:#d6d6d6;left:971.10px;">No extensions required.</div>
<div class="t" style="top:311.58px;font-size:11.3px;color:#e0e0e0;left:962.20px;">Timing</div>
<div class="r" style="left:953px;top:333.3px;width:334px;height:84.0px;background:#2d2d2d;border-radius:4px;"></div>
<div class="t" style="top:341.33px;font-size:10.6px;color:#d6d6d6;left:655.40px;width:400px;text-align:right;">Start:</div>
<div class="r" style="left:1063.7px;top:343.6px;width:89px;height:15.3px;background:#1a1a1a;border-radius:3px;box-shadow:0 0 0 0.5px rgba(0,0,0,0.5);"></div>
<svg class="r" style="left:1067px;top:348.6px" width="8" height="6" viewBox="0 0 8 6"><path d="M1 1.5L4 4.5L7 1.5" stroke="#555" stroke-width="1" fill="none"/></svg>
<svg class="r" style="left:1141px;top:348.6px" width="8" height="6" viewBox="0 0 8 6"><path d="M1 4.5L4 1.5L7 4.5" stroke="#555" stroke-width="1" fill="none"/></svg>
<div class="t" style="top:341.03px;font-size:11.17px;color:#dcdcdc;left:1078.40px;">00:00:00:00</div>
<div class="r" style="left:1167.4px;top:346.7px;width:10.9px;height:10px;background:#3a3a3a;border-radius:2px;"></div>
<div class="t" style="top:341.68px;font-size:10.46px;color:#8a8a8a;left:1182.40px;">Drop frame</div>
<div class="t" style="top:365.83px;font-size:10.6px;color:#d6d6d6;left:655.40px;width:400px;text-align:right;">In point:</div>
<div class="r" style="left:1063.7px;top:367.8px;width:89px;height:15.3px;background:#1a1a1a;border-radius:3px;box-shadow:0 0 0 0.5px rgba(0,0,0,0.5);"></div>
<svg class="r" style="left:1067px;top:372.8px" width="8" height="6" viewBox="0 0 8 6"><path d="M1 1.5L4 4.5L7 1.5" stroke="#555" stroke-width="1" fill="none"/></svg>
<svg class="r" style="left:1141px;top:372.8px" width="8" height="6" viewBox="0 0 8 6"><path d="M1 4.5L4 1.5L7 4.5" stroke="#555" stroke-width="1" fill="none"/></svg>
<div class="t" style="top:365.23px;font-size:11.17px;color:#dcdcdc;left:1078.40px;">00:00:00:00</div>
<div class="t" style="top:390.33px;font-size:10.6px;color:#d6d6d6;left:655.40px;width:400px;text-align:right;">Duration (in-out):</div>
<div class="r" style="left:1063.7px;top:392.3px;width:89px;height:15.3px;background:#1a1a1a;border-radius:3px;box-shadow:0 0 0 0.5px rgba(0,0,0,0.5);"></div>
<svg class="r" style="left:1067px;top:397.3px" width="8" height="6" viewBox="0 0 8 6"><path d="M1 1.5L4 4.5L7 1.5" stroke="#555" stroke-width="1" fill="none"/></svg>
<svg class="r" style="left:1141px;top:397.3px" width="8" height="6" viewBox="0 0 8 6"><path d="M1 4.5L4 1.5L7 4.5" stroke="#555" stroke-width="1" fill="none"/></svg>
<div class="t" style="top:389.73px;font-size:11.17px;color:#dcdcdc;left:1078.40px;">00:00:20:26</div>
<div class="t" style="top:428.37px;font-size:11.35px;color:#e0e0e0;left:962.20px;">File Properties</div>
<div class="r" style="left:953px;top:449.8px;width:334px;height:62.6px;background:#2d2d2d;border-radius:4px;"></div>
<div class="t" style="top:456.43px;font-size:10.6px;color:#d6d6d6;left:655.40px;width:400px;text-align:right;">Language:</div>
<div class="r" style="left:1063.2px;top:461px;width:125.6px;height:14.2px;background:#545454;border-radius:3px;box-shadow:0 0.5px 0 rgba(0,0,0,0.3);"></div>
<div class="t" style="top:458.06px;font-size:10.5px;color:#9c9c9c;left:1068.40px;">Unknown language</div>
<svg class="r" style="left:1178.5px;top:463.6px" width="7" height="9" viewBox="0 0 7 9"><path d="M1.2 3.4L3.5 1.2L5.8 3.4M1.2 5.6L3.5 7.8L5.8 5.6" stroke="#d0d0d0" stroke-width="1.1" fill="none"/></svg>
<div class="t" style="top:482.23px;font-size:10.6px;color:#d6d6d6;left:655.40px;width:400px;text-align:right;">Country:</div>
<div class="r" style="left:1063.2px;top:486.8px;width:125.6px;height:14.2px;background:#545454;border-radius:3px;box-shadow:0 0.5px 0 rgba(0,0,0,0.3);"></div>
<div class="t" style="top:483.86px;font-size:10.5px;color:#9c9c9c;left:1068.40px;">No Value</div>
<svg class="r" style="left:1178.5px;top:489.40000000000003px" width="7" height="9" viewBox="0 0 7 9"><path d="M1.2 3.4L3.5 1.2L5.8 3.4M1.2 5.6L3.5 7.8L5.8 5.6" stroke="#d0d0d0" stroke-width="1.1" fill="none"/></svg>
<div class="t" style="top:524.03px;font-size:11.45px;color:#e0e0e0;left:961.80px;">Video Properties</div>
<div class="r" style="left:953px;top:545.3px;width:334px;height:108.9px;background:#2d2d2d;border-radius:4px;"></div>
<div class="t" style="top:551.33px;font-size:10.6px;color:#d6d6d6;left:655.80px;width:400px;text-align:right;">Field order:</div>
<div class="r" style="left:1063.2px;top:556.3px;width:125.6px;height:14.2px;background:#545454;border-radius:3px;box-shadow:0 0.5px 0 rgba(0,0,0,0.3);"></div>
<div class="t" style="top:553.96px;font-size:10.5px;color:#9c9c9c;left:1068.40px;">Progressive</div>
<svg class="r" style="left:1178.5px;top:558.9px" width="7" height="9" viewBox="0 0 7 9"><path d="M1.2 3.4L3.5 1.2L5.8 3.4M1.2 5.6L3.5 7.8L5.8 5.6" stroke="#d0d0d0" stroke-width="1.1" fill="none"/></svg>
<div class="t" style="top:577.33px;font-size:10.6px;color:#d6d6d6;left:655.80px;width:400px;text-align:right;">Color space:</div>
<div class="r" style="left:1063.2px;top:582.3px;width:125.6px;height:14.2px;background:#545454;border-radius:3px;box-shadow:0 0.5px 0 rgba(0,0,0,0.3);"></div>
<div class="t" style="top:579.96px;font-size:10.5px;color:#9c9c9c;left:1068.40px;">Rec. 709*</div>
<svg class="r" style="left:1178.5px;top:584.9px" width="7" height="9" viewBox="0 0 7 9"><path d="M1.2 3.4L3.5 1.2L5.8 3.4M1.2 5.6L3.5 7.8L5.8 5.6" stroke="#d0d0d0" stroke-width="1.1" fill="none"/></svg>
<div class="t" style="top:603.33px;font-size:10.6px;color:#d6d6d6;left:655.80px;width:400px;text-align:right;">Camera log:</div>
<div class="r" style="left:1063.2px;top:608.3px;width:125.6px;height:14.2px;background:#545454;border-radius:3px;box-shadow:0 0.5px 0 rgba(0,0,0,0.3);"></div>
<div class="t" style="top:605.96px;font-size:10.5px;color:#9c9c9c;left:1068.40px;">No Value</div>
<svg class="r" style="left:1178.5px;top:610.9px" width="7" height="9" viewBox="0 0 7 9"><path d="M1.2 3.4L3.5 1.2L5.8 3.4M1.2 5.6L3.5 7.8L5.8 5.6" stroke="#d0d0d0" stroke-width="1.1" fill="none"/></svg>
<div class="t" style="top:629.46px;font-size:10.5px;color:#d6d6d6;left:1063.10px;">* Source, <span style="position:relative;top:-2px;font-size:9px">†</span> Inferred</div>
<div class="t" style="top:665.29px;font-size:11.57px;color:#e0e0e0;left:961.80px;">Projection Properties</div>
<div class="t" style="top:697.98px;font-size:11.6px;color:#e0e0e0;left:961.80px;">Job Annotations</div>
<div class="t" style="top:729.92px;font-size:11.2px;color:#e0e0e0;left:961.80px;">HDR Metadata</div>
<div class="t" style="top:762.63px;font-size:11.45px;color:#e0e0e0;left:961.80px;">Audio Properties</div>
<div class="r" style="left:0px;top:0px;width:1px;height:793px;background:#646464;"></div>
<div class="r" style="left:1300px;top:0px;width:1px;height:793px;background:#5a5a5a;"></div>
<div class="r" style="left:0px;top:791px;width:1301px;height:2px;background:#4a4a4a;"></div>
<div class="r" style="left:0px;top:0px;width:2px;height:2px;background:#000;"></div>
<div class="r" style="left:1299px;top:0px;width:2px;height:2px;background:#000;"></div>
<div class="r" style="left:0px;top:791px;width:2px;height:2px;background:#000;"></div>
<div class="r" style="left:1299px;top:791px;width:2px;height:2px;background:#000;"></div>
</body></html>
